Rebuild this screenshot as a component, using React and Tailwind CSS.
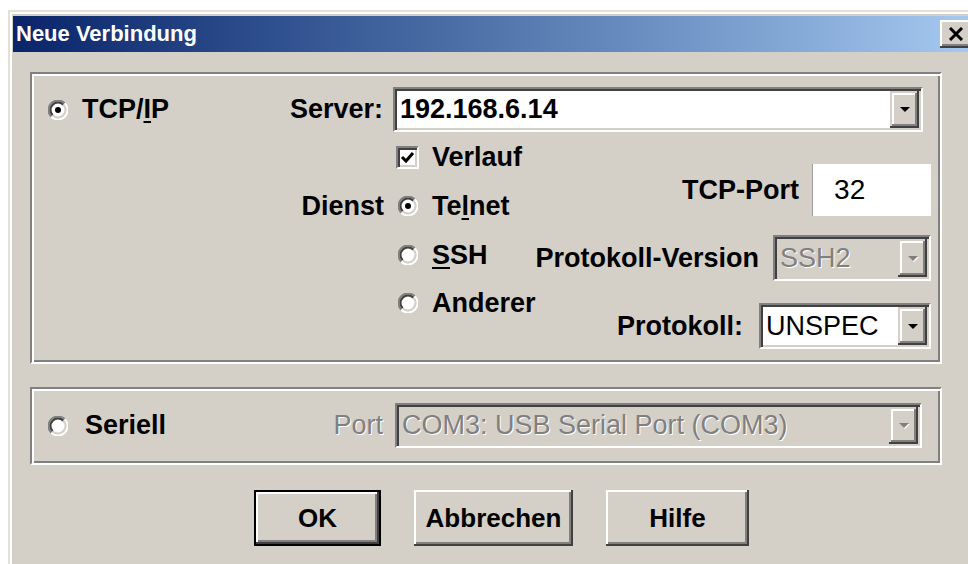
import React from 'react';

// classic 3D radio button, drawn at double size
const Radio = ({ checked }) => (
  <svg width="20" height="20" viewBox="0 0 20 20" className="shrink-0">
    <circle cx="10" cy="10" r="8" fill="#ffffff" />
    <path d="M3.3 16.7 A9 9 0 0 1 16.7 3.3" fill="none" stroke="#808080" strokeWidth="2" />
    <path d="M16.7 3.3 A9 9 0 0 1 3.3 16.7" fill="none" stroke="#ffffff" strokeWidth="2" />
    <path d="M4.7 15.3 A7 7 0 0 1 15.3 4.7" fill="none" stroke="#404040" strokeWidth="2" />
    <path d="M15.3 4.7 A7 7 0 0 1 4.7 15.3" fill="none" stroke="#d4d0c8" strokeWidth="2" />
    {checked && <circle cx="10" cy="10" r="3" fill="#000000" />}
  </svg>
);

const CheckBox = () => (
  <div className="w-[23px] h-[23px] shrink-0 bg-white border-2 border-t-[#808080] border-l-[#808080] border-r-white border-b-white shadow-[inset_2px_2px_0_#404040,inset_-2px_-2px_0_#d4d0c8] flex items-center justify-center">
    <svg width="15" height="15" viewBox="0 0 15 15">
      <path d="M2 7 L6 11 L13 3" fill="none" stroke="#000000" strokeWidth="3" />
    </svg>
  </div>
);

const Arrow = ({ disabled }) => (
  <svg width="12" height="7" viewBox="0 0 12 7">
    {disabled && <path d="M2 2 H12 L7 7 Z" fill="#ffffff" />}
    <path d="M1 1 H11 L6 6 Z" fill={disabled ? '#808080' : '#000000'} />
  </svg>
);

const Combo = ({ value, className, disabled, bold }) => (
  <div className={`flex shrink-0 border-2 border-t-[#808080] border-l-[#808080] border-r-white border-b-white shadow-[inset_2px_2px_0_#404040,inset_-2px_-2px_0_#d4d0c8] p-[2px] ${className}`}>
    <div
      className={`flex-1 flex items-center pl-[3px] text-[27px] leading-none ${
        disabled ? 'bg-[#d4d0c8] text-[#808080] [text-shadow:1px_1px_0_#ffffff]' : 'bg-white text-black'
      } ${bold ? 'font-bold' : 'font-normal'}`}
    >
      {value}
    </div>
    <div className="w-[29px] flex items-center justify-center bg-[#d4d0c8] shadow-[inset_-2px_-2px_0_#404040,inset_2px_2px_0_#d4d0c8,inset_-4px_-4px_0_#808080,inset_4px_4px_0_#ffffff]">
      <Arrow disabled={disabled} />
    </div>
  </div>
);

const Button = ({ children, className, isDefault }) => (
  <button
    className={`h-[56px] flex items-center justify-center bg-[#d4d0c8] text-[26px] font-bold leading-none text-black ${
      isDefault
        ? 'border-2 border-black shadow-[inset_-2px_-2px_0_#404040,inset_2px_2px_0_#ffffff,inset_-4px_-4px_0_#808080]'
        : 'shadow-[inset_-2px_-2px_0_#404040,inset_2px_2px_0_#ffffff,inset_-4px_-4px_0_#808080]'
    } ${className}`}
  >
    {children}
  </button>
);

const groupBox =
  'w-[912px] border-2 border-t-[#808080] border-l-[#808080] border-r-white border-b-white shadow-[inset_2px_2px_0_#ffffff,inset_-2px_-2px_0_#808080]';

const label = 'text-[27px] font-bold leading-none text-black whitespace-nowrap';

export default function App() {
  return (
    <div className="w-[968px] h-[564px] overflow-hidden bg-white pl-[8px] pt-[10px] font-['Liberation_Sans',Arial,sans-serif]">
      <div className="w-[973px] h-[600px] bg-[#d4d0c8] pl-[5px] pt-[6px] pr-[5px] shadow-[inset_2px_2px_0_#e4e0d8,inset_4px_4px_0_#ffffff]">
        {/* Title bar */}
        <div className="h-[36px] flex items-center justify-between bg-linear-to-r from-[#0a246a] to-[#a6caf0] pl-[3px] pr-[4px]">
          <span className="text-white text-[22px] font-bold leading-none">Neue Verbindung</span>
          <div className="w-[32px] h-[28px] flex items-center justify-center bg-[#d4d0c8] shadow-[inset_-2px_-2px_0_#404040,inset_2px_2px_0_#ffffff,inset_-4px_-4px_0_#808080]">
            <svg width="16" height="14" viewBox="0 0 16 14">
              <path d="M2 1 L14 13 M14 1 L2 13" stroke="#000000" strokeWidth="3" />
            </svg>
          </div>
        </div>

        <div className="pl-[17px] pt-[20px]">
          {/* TCP/IP group */}
          <div className={`${groupBox} pt-[13px] pb-[13px]`}>
            <div className="flex items-center">
              <div className="w-[351px] pl-[16px] flex items-center justify-between">
                <div className="flex items-center gap-[14px]">
                  <Radio checked />
                  <span className={label}>
                    TCP/<span className="underline decoration-2 underline-offset-[3px]">I</span>P
                  </span>
                </div>
                <span className={label}>Server:</span>
              </div>
              <Combo value="192.168.6.14" bold className="ml-[10px] w-[530px] h-[45px]" />
            </div>

            <div className="flex items-start mt-[1px]">
              <div className="flex flex-col">
                <div className="h-[48px] flex items-center">
                  <div className="w-[352px]" />
                  <div className="ml-[12px] flex items-center gap-[13px]">
                    <CheckBox />
                    <span className={label}>Verlauf</span>
                  </div>
                </div>
                <div className="h-[50px] flex items-center">
                  <div className={`w-[352px] text-right ${label}`}>Dienst</div>
                  <div className="ml-[14px] flex items-center gap-[14px]">
                    <Radio checked />
                    <span className={label}>
                      Te<span className="underline decoration-2 underline-offset-[3px]">l</span>net
                    </span>
                  </div>
                </div>
                <div className="h-[48px] flex items-center">
                  <div className="w-[352px]" />
                  <div className="ml-[14px] flex items-center gap-[14px]">
                    <Radio />
                    <span className={label}>
                      <span className="underline decoration-2 underline-offset-[3px]">S</span>SH
                    </span>
                  </div>
                </div>
                <div className="h-[48px] flex items-center">
                  <div className="w-[352px]" />
                  <div className="ml-[14px] flex items-center gap-[14px]">
                    <Radio />
                    <span className={label}>Anderer</span>
                  </div>
                </div>
              </div>

              <div className="flex-1 flex flex-col items-end pt-[31px] pr-[11px]">
                <div className="flex items-center gap-[13px]">
                  <span className={label}>TCP-Port</span>
                  <div className="w-[119px] h-[52px] bg-white border-l border-[#a0a0a0] flex items-center pl-[21px] text-[28px] leading-none text-black">
                    32
                  </div>
                </div>
                <div className="flex items-center gap-[14px] mt-[19px]">
                  <span className={label}>Protokoll-Version</span>
                  <Combo value="SSH2" disabled className="w-[158px] h-[46px]" />
                </div>
                <div className="flex items-center gap-[16px] mt-[22px]">
                  <span className={label}>Protokoll:</span>
                  <Combo value="UNSPEC" className="w-[172px] h-[46px]" />
                </div>
              </div>
            </div>
          </div>

          {/* Serial group */}
          <div className={`${groupBox} mt-[23px] pt-[14px] pb-[15px]`}>
            <div className="flex items-center">
              <div className="w-[351px] pl-[16px] flex items-center justify-between">
                <div className="flex items-center gap-[17px]">
                  <Radio />
                  <span className={label}>Seriell</span>
                </div>
                <span className="text-[27px] leading-none text-[#808080] [text-shadow:1px_1px_0_#ffffff]">Port</span>
              </div>
              <Combo value="COM3: USB Serial Port (COM3)" disabled className="ml-[12px] w-[527px] h-[45px]" />
            </div>
          </div>

          {/* Dialog buttons */}
          <div className="flex gap-[33px] mt-[25px] ml-[224px]">
            <Button isDefault className="w-[127px]">OK</Button>
            <Button className="w-[159px]">Abbrechen</Button>
            <Button className="w-[143px]">Hilfe</Button>
          </div>
        </div>
      </div>
    </div>
  );
}
